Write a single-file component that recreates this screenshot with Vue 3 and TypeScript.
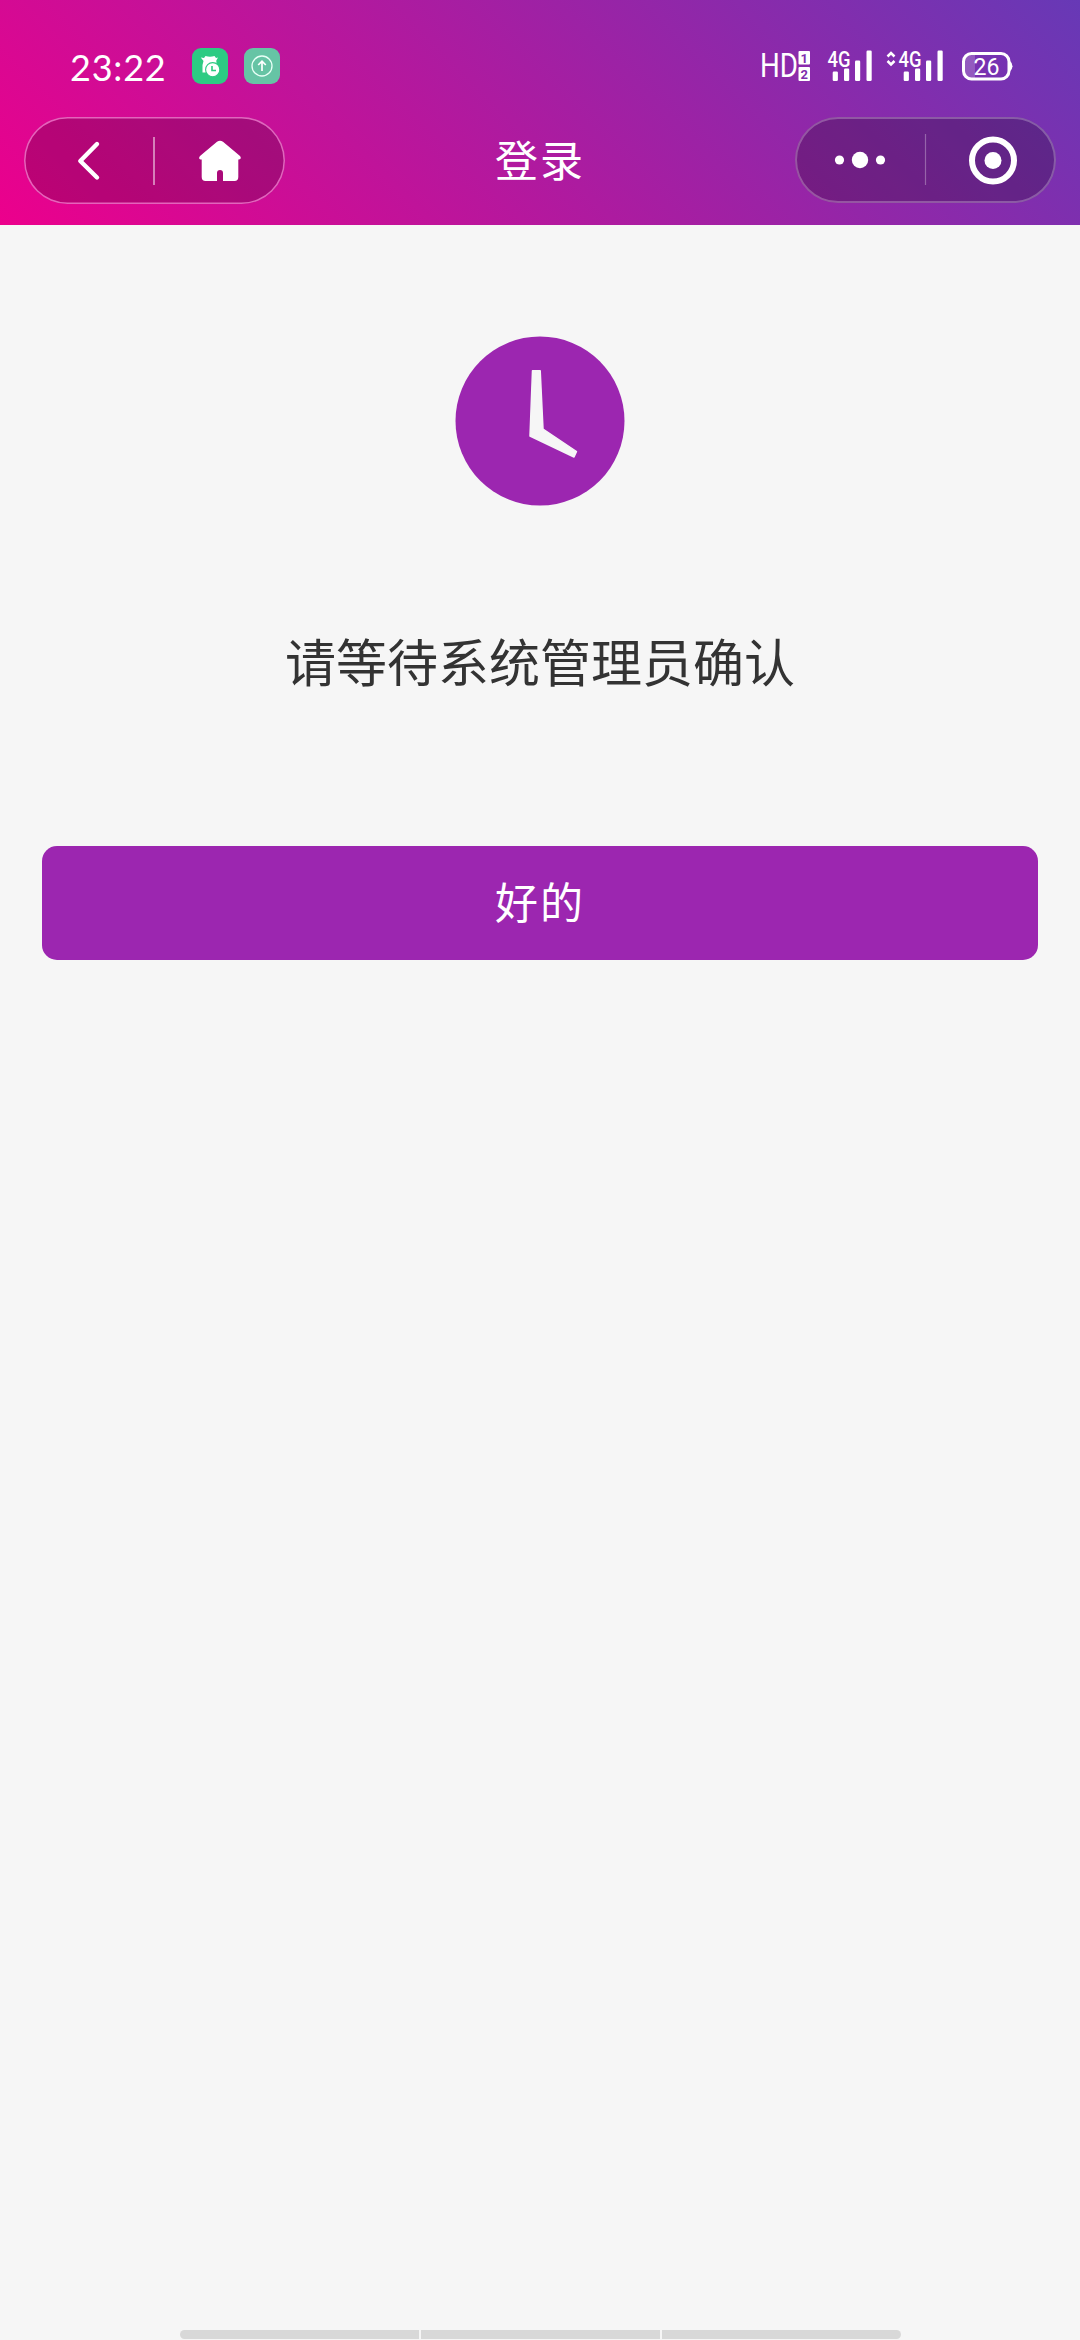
<template>
  <div class="page">
    <header class="header">
      <div class="status-bar">
        <div class="status-left">
          <span class="time">{{ time }}</span>
          <svg class="app-icon" width="36" height="36" viewBox="0 0 36 36">
            <rect width="36" height="36" rx="9" fill="#2dcb83" />
            <path d="M8.800 9.500 L12 10 L13.500 8 Q18 9.500 22.500 8 L24 10 L26 9.500 L24.300 12.500 L24.500 17 L15 24.500 H10.500 V17 L11.500 13 Z" fill="#fff" />
            <circle cx="20.700" cy="21.700" r="7.100" fill="#fff" stroke="#2dcb83" stroke-width="1.100" />
            <path d="M20 18 V22.500 H24" fill="none" stroke="#2dcb83" stroke-width="1.600" />
          </svg>
          <svg class="app-icon" width="36" height="36" viewBox="0 0 36 36">
            <rect width="36" height="36" rx="9" fill="#66c4a5" />
            <circle cx="18" cy="18" r="10" fill="none" stroke="#e8fff6" stroke-width="1.300" />
            <path d="M18 23 V13.500 M14.200 17 L18 13.200 L21.800 17" fill="none" stroke="#fff" stroke-width="1.700" />
          </svg>
        </div>

        <div class="status-right">
          <svg class="hd" width="52" height="48" viewBox="-2 -8 52 48">
            <text x="-1" y="26.500" font-size="33" textLength="38" lengthAdjust="spacingAndGlyphs">HD</text>
            <rect x="37.500" y="1" width="11.500" height="13.500" rx="1" />
            <rect x="37.500" y="17" width="11.500" height="14" rx="1" />
            <text class="sim" x="39.600" y="12.500" font-size="13">1</text>
            <text class="sim" x="39.600" y="28.500" font-size="13">2</text>
          </svg>
          <svg v-for="s in signals" :key="s.id" :class="s.id" :width="s.width" height="48" :viewBox="`${46 - s.width} -8 ${s.width} 48`">
            <path v-if="s.data" d="M-10.500 6.500 L-7 3 L-3.500 6.500 M-10.500 11 L-7 14.500 L-3.500 11" fill="none" stroke="#fff" stroke-width="2.500" />
            <text class="net" x="0.500" y="16.500" font-size="22" textLength="23" lengthAdjust="spacingAndGlyphs">4G</text>
            <rect v-for="b in bars" :key="b.x" :x="b.x" :y="31 - b.h" width="5.200" :height="b.h" rx="1.200" />
          </svg>
          <svg class="battery" width="52" height="30" viewBox="0 0 52 30">
            <path d="M10 2.500 H14 V27.500 H10 Q2.500 27.500 2.500 20 V10 Q2.500 2.500 10 2.500Z" fill-opacity="0.200" />
            <rect x="2.500" y="2.500" width="45.500" height="25.500" rx="8" fill="none" stroke="#fff" stroke-width="3" />
            <path d="M48.500 9.500 Q51.500 12 51.500 15.200 Q51.500 18.500 48.500 21 Z" />
            <text x="12.500" y="23.800" font-size="24" textLength="26" lengthAdjust="spacingAndGlyphs">26</text>
          </svg>
        </div>
      </div>

      <nav class="nav-bar">
        <div class="capsule capsule-left">
          <svg width="261" height="87" viewBox="0 0 261 87">
            <path d="M73 27 L56.300 44 L73 60.500" fill="none" stroke="#fff" stroke-width="4.400" stroke-linecap="round" stroke-linejoin="round" />
            <path d="M130 20 V68" stroke="#fff" stroke-opacity="0.650" stroke-width="1.500" />
            <path d="M193 24.800 Q196 22.500 199 24.800 L216 39 Q218 41.500 215 42.500 H214.300 V60 Q214.300 64 210.500 64 H199 V56 Q199 53 196 53 Q193 53 193 56 V64 H181.500 Q177.700 64 177.700 60 V42.500 H176.500 Q174 41.500 176 39 Z" fill="#fff" />
          </svg>
        </div>
        <h1 class="title">登录</h1>
        <div class="capsule capsule-right">
          <svg width="261" height="86" viewBox="0 0 261 86" fill="#fff">
            <circle cx="44.500" cy="43" r="4.600" />
            <circle cx="65" cy="43" r="8.200" />
            <circle cx="85.500" cy="43" r="4.600" />
            <path d="M130.500 17 V68" stroke="#fff" stroke-opacity="0.300" stroke-width="1.200" />
            <circle cx="198" cy="43.500" r="21" fill="none" stroke="#fff" stroke-width="6" />
            <circle cx="198" cy="43.500" r="8.500" />
          </svg>
        </div>
      </nav>
    </header>

    <main class="content">
      <svg class="clock" width="170" height="170" viewBox="0 0 170 170">
        <circle cx="85" cy="85" r="84.500" fill="#9c26b0" />
        <path d="M77.500 34.800 H85.200 L88 93 L121.500 115.500 L119 121 L75 100 Z" fill="#f6f6f6" stroke="#f6f6f6" stroke-width="1.500" stroke-linejoin="round" />
      </svg>
      <p class="message">{{ message }}</p>
      <button class="ok-button" type="button" @click="confirm">好的</button>
    </main>

    <footer class="gesture-bar">
      <span></span>
      <span></span>
      <span></span>
    </footer>
  </div>
</template>

<script setup lang="ts">
import { ref } from 'vue';

const emit = defineEmits(['confirm']);

const time = ref('23:22');
const message = ref('请等待系统管理员确认');

const bars = [
  { x: 5.7, h: 9.5 },
  { x: 17, h: 12.5 },
  { x: 28, h: 20.5 },
  { x: 39.5, h: 30.5 },
];

const signals = [
  { id: 'sim-one', width: 46, data: false },
  { id: 'sim-two', width: 58, data: true },
];

const confirm = () => {
  emit('confirm');
};
</script>

<style>
body {
  background-color: #f6f6f6;
}
</style>

<style scoped>
.page {
  display: flex;
  flex-direction: column;
  width: 1080px;
  height: 2340px;
  overflow: hidden;
  background-color: #f6f6f6;
  font-family: 'Noto Sans CJK SC', sans-serif;
}

.page svg {
  display: block;
  flex-shrink: 0;
}

.header {
  height: 225px;
  flex-shrink: 0;
  color: #fff;
  background-image: linear-gradient(45deg, #ec008c, #6739b6);
}

/* Barra de estado */
.status-bar {
  display: flex;
  justify-content: space-between;
  height: 117px;
  box-sizing: border-box;
  padding: 42px 67px 0 70px;
}

.status-left {
  display: flex;
  height: 36px;
  margin-top: 6px;
}

.time {
  width: 122px;
  font-family: Lato, sans-serif;
  font-size: 36px;
  line-height: 39px;
  letter-spacing: 0.8px;
}

.app-icon + .app-icon {
  margin-left: 16px;
}

.status-right {
  display: flex;
}

.status-right svg {
  fill: #fff;
  font-family: Roboto, sans-serif;
}

.status-right .sim {
  fill: #7f2dae;
  font-weight: 700;
}

.status-right .net {
  font-weight: 500;
}

.sim-one {
  margin-left: 16px;
}

.sim-two {
  margin-left: 13px;
}

.battery {
  margin: 9px 0 0 17px;
}

/* Navegación */
.nav-bar {
  display: flex;
  align-items: flex-start;
  justify-content: space-between;
  padding: 0 24px;
}

.capsule {
  width: 261px;
  border-radius: 44px;
  background-color: rgba(0, 0, 0, 0.18);
}

.capsule-left {
  height: 87px;
  box-shadow: inset 0 0 0 1.5px rgba(255, 150, 225, 0.65);
}

.capsule-right {
  height: 86px;
  background-color: rgba(0, 0, 0, 0.22);
  box-shadow: inset 0 0 0 2px rgba(255, 255, 255, 0.25);
}

.title {
  margin: 0;
  font-size: 43px;
  font-weight: 400;
  line-height: 82px;
  letter-spacing: 2px;
}

.content {
  display: flex;
  flex: 1;
  flex-direction: column;
  align-items: center;
  padding: 111px 42px 0;
}

.message {
  margin: 112px 0 0;
  color: #333;
  font-size: 51px;
  line-height: 84px;
}

.ok-button {
  width: 996px;
  height: 114px;
  margin-top: 144px;
  padding: 0 0 6px;
  border: none;
  border-radius: 15px;
  background-color: #9c26b0;
  color: #fff;
  font-family: inherit;
  font-size: 43px;
  letter-spacing: 2px;
  cursor: pointer;
}

.gesture-bar {
  display: flex;
  gap: 2px;
  width: 721px;
  height: 9px;
  margin: 0 auto 1px;
  overflow: hidden;
  border-radius: 5px;
}

.gesture-bar span {
  flex: 1;
  background-color: #d8d8d8;
}
</style>
